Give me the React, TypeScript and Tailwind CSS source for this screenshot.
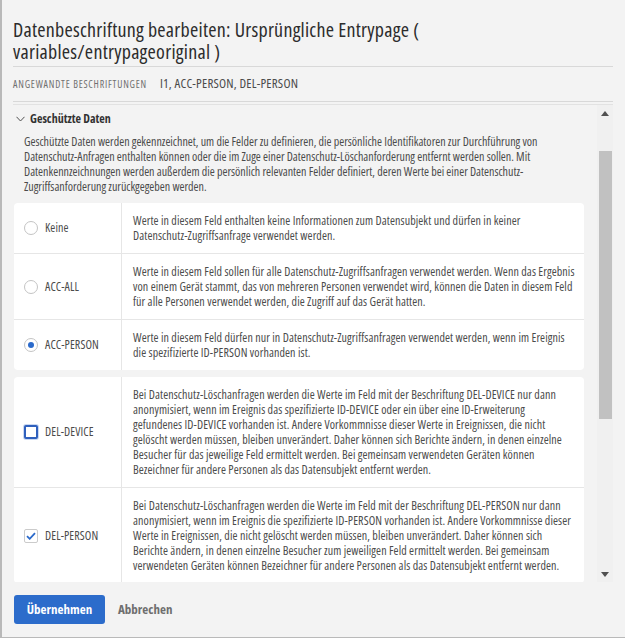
const INTRO = [
  "Geschützte Daten werden gekennzeichnet, um die Felder zu definieren, die persönliche Identifikatoren zur Durchführung von",
  "Datenschutz-Anfragen enthalten können oder die im Zuge einer Datenschutz-Löschanforderung entfernt werden sollen. Mit",
  "Datenkennzeichnungen werden außerdem die persönlich relevanten Felder definiert, deren Werte bei einer Datenschutz-",
  "Zugriffsanforderung zurückgegeben werden.",
];

type Option = {
  label: string;
  checked: boolean;
  focused?: boolean;
  lines: string[];
};

const ACCESS: Option[] = [
  {
    label: "Keine",
    checked: false,
    lines: [
      "Werte in diesem Feld enthalten keine Informationen zum Datensubjekt und dürfen in keiner",
      "Datenschutz-Zugriffsanfrage verwendet werden.",
    ],
  },
  {
    label: "ACC-ALL",
    checked: false,
    lines: [
      "Werte in diesem Feld sollen für alle Datenschutz-Zugriffsanfragen verwendet werden. Wenn das Ergebnis",
      "von einem Gerät stammt, das von mehreren Personen verwendet wird, können die Daten in diesem Feld",
      "für alle Personen verwendet werden, die Zugriff auf das Gerät hatten.",
    ],
  },
  {
    label: "ACC-PERSON",
    checked: true,
    lines: [
      "Werte in diesem Feld dürfen nur in Datenschutz-Zugriffsanfragen verwendet werden, wenn im Ereignis",
      "die spezifizierte ID-PERSON vorhanden ist.",
    ],
  },
];

const DELETE: Option[] = [
  {
    label: "DEL-DEVICE",
    checked: false,
    focused: true,
    lines: [
      "Bei Datenschutz-Löschanfragen werden die Werte im Feld mit der Beschriftung DEL-DEVICE nur dann",
      "anonymisiert, wenn im Ereignis das spezifizierte ID-DEVICE oder ein über eine ID-Erweiterung",
      "gefundenes ID-DEVICE vorhanden ist. Andere Vorkommnisse dieser Werte in Ereignissen, die nicht",
      "gelöscht werden müssen, bleiben unverändert. Daher können sich Berichte ändern, in denen einzelne",
      "Besucher für das jeweilige Feld ermittelt werden. Bei gemeinsam verwendeten Geräten können",
      "Bezeichner für andere Personen als das Datensubjekt entfernt werden.",
    ],
  },
  {
    label: "DEL-PERSON",
    checked: true,
    lines: [
      "Bei Datenschutz-Löschanfragen werden die Werte im Feld mit der Beschriftung DEL-PERSON nur dann",
      "anonymisiert, wenn im Ereignis die spezifizierte ID-PERSON vorhanden ist. Andere Vorkommnisse dieser",
      "Werte in Ereignissen, die nicht gelöscht werden müssen, bleiben unverändert. Daher können sich",
      "Berichte ändern, in denen einzelne Besucher zum jeweiligen Feld ermittelt werden. Bei gemeinsam",
      "verwendeten Geräten können Bezeichner für andere Personen als das Datensubjekt entfernt werden.",
    ],
  },
];

function Radio({ checked }: { checked: boolean }) {
  return (
    <span className="flex h-[14px] w-[14px] shrink-0 items-center justify-center rounded-full border border-[#c4c4c4] bg-white">
      {checked ? <span className="h-[6px] w-[6px] rounded-full bg-[#2b6acb]" /> : null}
    </span>
  );
}

function Checkbox({ checked, focused }: { checked: boolean; focused?: boolean }) {
  return (
    <span
      className={`flex h-[14px] w-[14px] shrink-0 items-center justify-center rounded-[2px] bg-white ${
        focused ? "border-2 border-[#2f60bd] shadow-[0_0_0_1px_#c9d8f2]" : "border border-[#cbcbcb]"
      }`}
    >
      {checked ? (
        <svg width="10" height="8" viewBox="0 0 10 8" fill="none">
          <path d="M1 4.2 3.7 6.8 9 1.2" stroke="#2b6acb" strokeWidth="1.8" />
        </svg>
      ) : null}
    </span>
  );
}

function OptionCard({ options, kind }: { options: Option[]; kind: "radio" | "check" }) {
  return (
    <div className="rounded-[4px] bg-white">
      {options.map((o, i) => (
        <div key={o.label} className={`flex ${i > 0 ? "border-t border-[#e6e6e6]" : ""}`}>
          <div className="flex w-[108px] shrink-0 items-center gap-[7px] border-r border-[#e6e6e6] pl-[10px] text-[12px] tracking-[0.1px] text-[#4b4b4b]">
            {kind === "radio" ? (
              <Radio checked={o.checked} />
            ) : (
              <Checkbox checked={o.checked} focused={o.focused} />
            )}
            {o.label}
          </div>
          <div className="py-[10px] pl-[11px] text-[12px] leading-[15px] tracking-[0.1px] whitespace-nowrap text-[#4b4b4b]">
            {o.lines.map((l) => (
              <div key={l}>{l}</div>
            ))}
          </div>
        </div>
      ))}
    </div>
  );
}

function Arrow({ up }: { up?: boolean }) {
  return (
    <div className="flex h-[16px] items-center justify-center">
      <svg width="8" height="5" viewBox="0 0 8 5">
        <path d={up ? "M0 5 4 0 8 5Z" : "M0 0 4 5 8 0Z"} fill="#505050" />
      </svg>
    </div>
  );
}

export default function App() {
  return (
    <div className="flex h-[638px] w-[625px] flex-col border-b border-l-2 border-[#b9b9b9] bg-[#f3f3f3] font-['Open_Sans',sans-serif] [font-stretch:75%]">
      <div className="pr-[12px] pl-[11px]">
        <h1 className="pt-[19px] text-[20px] leading-[22px] tracking-[0.25px] text-[#2c2c2c]">
          Datenbeschriftung bearbeiten: Ursprüngliche Entrypage (
          <br />
          variables/entrypageoriginal )
        </h1>
        <div className="mt-[3px] flex h-[36px] items-center border-y border-[#d8d8d8]">
          <span className="w-[147px] text-[10px] tracking-[0.8px] text-[#707070] uppercase">
            Angewandte Beschriftungen
          </span>
          <span className="text-[13px] tracking-[0.2px] text-[#4b4b4b]">I1, ACC-PERSON, DEL-PERSON</span>
        </div>
      </div>

      <div className="mt-[2px] mr-[12px] ml-[11px] flex min-h-0 flex-1 border-t border-[#e2e2e2]">
        <div className="min-w-0 flex-1 overflow-hidden pr-[13px] pl-[1px]">
          <div className="mt-[6px] flex h-[16px] items-center gap-[5px] pl-[2px] text-[12px] font-bold text-[#323232]">
            <svg width="9" height="6" viewBox="0 0 9 6" fill="none">
              <path d="M0.5 0.8 4.5 5 8.5 0.8" stroke="#505050" strokeWidth="1" />
            </svg>
            Geschützte Daten
          </div>
          <div className="mt-[7px] pl-[10px] text-[12px] leading-[15px] whitespace-nowrap text-[#4b4b4b]">
            {INTRO.map((l) => (
              <div key={l}>{l}</div>
            ))}
          </div>
          <div className="mt-[9px]">
            <OptionCard options={ACCESS} kind="radio" />
          </div>
          <div className="mt-[7px]">
            <OptionCard options={DELETE} kind="check" />
          </div>
        </div>
        <div className="flex w-[16px] shrink-0 flex-col bg-[#f0f0f0]">
          <Arrow up />
          <div className="flex-1">
            <div className="mt-[30px] ml-[2px] h-[268px] w-[13px] bg-[#c1c1c1]" />
          </div>
          <Arrow />
        </div>
      </div>

      <div className="flex h-[55px] shrink-0 items-center gap-[13px] pl-[12px]">
        <button className="h-[29px] w-[91px] rounded-[3px] bg-[#2c6ccb] text-[13px] font-bold text-white">
          Übernehmen
        </button>
        <button className="text-[13px] font-bold text-[#6e6e6e]">Abbrechen</button>
      </div>
    </div>
  );
}
